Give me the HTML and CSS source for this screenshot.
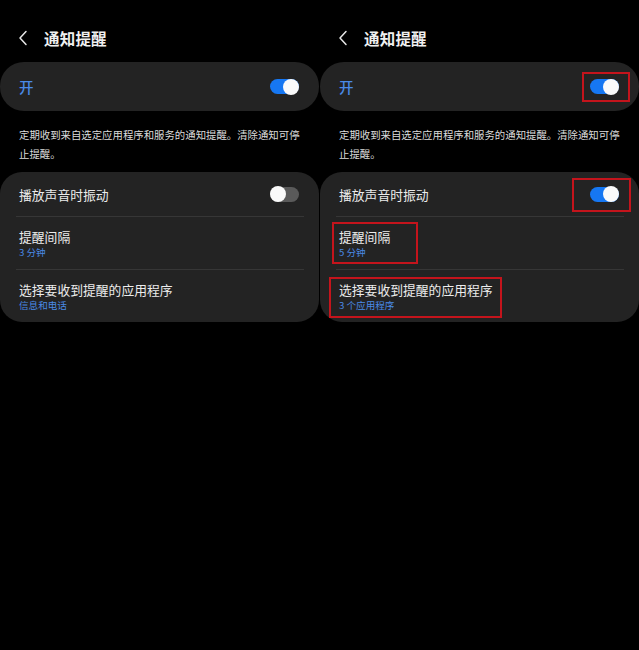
FILE: index.html
```html
<!DOCTYPE html>
<html lang="zh-CN">
<head>
<meta charset="utf-8">
<title>通知提醒</title>
<link rel="stylesheet" href="styles.css">
</head>
<body>
<div class="screens">
  <section class="panel">
    <header class="header">
      <svg class="back" viewBox="0 0 10 16" width="10" height="16"><path d="M8 1.5 L2 8 L8 14.5" fill="none" stroke="#e6e6e6" stroke-width="1.5" stroke-linecap="round" stroke-linejoin="round"/></svg>
      <h1 class="title">通知提醒</h1>
    </header>
    <div class="card master">
      <span class="master-label">开</span>
      <span class="toggle on"><span class="knob"></span></span>
    </div>
    <p class="desc">定期收到来自选定应用程序和服务的通知提醒。清除通知可停止提醒。</p>
    <div class="card list">
      <div class="row row-first">
        <span class="row-title">播放声音时振动</span>
        <span class="toggle off"><span class="knob"></span></span>
      </div>
      <div class="row">
        <div class="text"><div class="row-title">提醒间隔</div><div class="row-sub">3 分钟</div></div>
      </div>
      <div class="row">
        <div class="text"><div class="row-title">选择要收到提醒的应用程序</div><div class="row-sub">信息和电话</div></div>
      </div>
    </div>
  </section>

  <section class="panel">
    <header class="header">
      <svg class="back" viewBox="0 0 10 16" width="10" height="16"><path d="M8 1.5 L2 8 L8 14.5" fill="none" stroke="#e6e6e6" stroke-width="1.5" stroke-linecap="round" stroke-linejoin="round"/></svg>
      <h1 class="title">通知提醒</h1>
    </header>
    <div class="card master">
      <span class="master-label">开</span>
      <span class="toggle on mark"><span class="knob"></span><span class="hl hl-t1"></span></span>
    </div>
    <p class="desc">定期收到来自选定应用程序和服务的通知提醒。清除通知可停止提醒。</p>
    <div class="card list">
      <div class="row row-first">
        <span class="row-title">播放声音时振动</span>
        <span class="toggle on mark"><span class="knob"></span><span class="hl hl-t2"></span></span>
      </div>
      <div class="row">
        <div class="text mark"><div class="row-title">提醒间隔</div><div class="row-sub">5 分钟</div><span class="hl hl-r2"></span></div>
      </div>
      <div class="row">
        <div class="text mark"><div class="row-title">选择要收到提醒的应用程序</div><div class="row-sub">3 个应用程序</div><span class="hl hl-r3"></span></div>
      </div>
    </div>
  </section>
</div>
</body>
</html>
```

FILE: styles.css
```css
* { box-sizing: border-box; }
html, body { margin: 0; padding: 0; background: #000; }
body {
  width: 639px;
  height: 650px;
  font-family: "Noto Sans CJK SC", "Noto Sans", sans-serif;
  color: #e8e8e8;
}
.screens {
  display: grid;
  grid-template-columns: 319px 319px;
  column-gap: 1px;
}
.panel { display: flex; flex-direction: column; }

.header {
  height: 62px;
  display: flex;
  align-items: center;
  padding: 14px 0 0 18px;
}
.back { display: block; margin-right: 16px; }
.title {
  margin: 0;
  font-size: 15.5px;
  font-weight: 700;
  color: #f0f0f0;
  letter-spacing: 0.2px;
}

.card {
  background: #232323;
  border-radius: 24px;
}
.master {
  height: 49px;
  display: flex;
  align-items: center;
  justify-content: space-between;
  padding: 0 20px 0 19px;
}
.master-label {
  font-size: 14.5px;
  font-weight: 500;
  color: #4a8ae6;
}

.toggle {
  position: relative;
  display: block;
  width: 29px;
  height: 15px;
  border-radius: 8px;
}
.toggle.on { background: #1677f2; }
.toggle.off { background: #5a5a5a; }
.knob {
  position: absolute;
  top: -0.5px;
  width: 16px;
  height: 16px;
  border-radius: 50%;
  background: #fafafa;
}
.toggle.on .knob { right: 0; }
.toggle.off .knob { left: 0; }

.desc {
  margin: 14px 0 9px;
  padding: 0 12px 0 19px;
  font-size: 10.4px;
  line-height: 19px;
  color: #dcdcdc;
}

.list {
  border-radius: 22px;
  padding: 0 15px 0 16px;
}
.row {
  height: 53px;
  display: flex;
  align-items: center;
  justify-content: space-between;
  padding: 0 5px 0 3px;
  border-top: 1px solid #363636;
}
.row-first {
  height: 44px;
  border-top: none;
}
.row-title {
  font-size: 12.8px;
  line-height: 17px;
  color: #ececec;
}
.row-sub {
  font-size: 9.6px;
  line-height: 14px;
  color: #4a8ae6;
}
.text { padding-top: 1px; }

.mark { position: relative; }
.hl {
  position: absolute;
  border: 2px solid #c4141c;
  pointer-events: none;
}
.hl-t1 { left: -8px; right: -11px; top: -7px; bottom: -8px; }
.hl-t2 { left: -18px; right: -12px; top: -9px; bottom: -10px; }
.hl-r2 { left: -7px; right: -28px; top: -5px; bottom: -5px; }
.hl-r3 { left: -10px; right: -9px; top: -3px; bottom: -6px; }
```
